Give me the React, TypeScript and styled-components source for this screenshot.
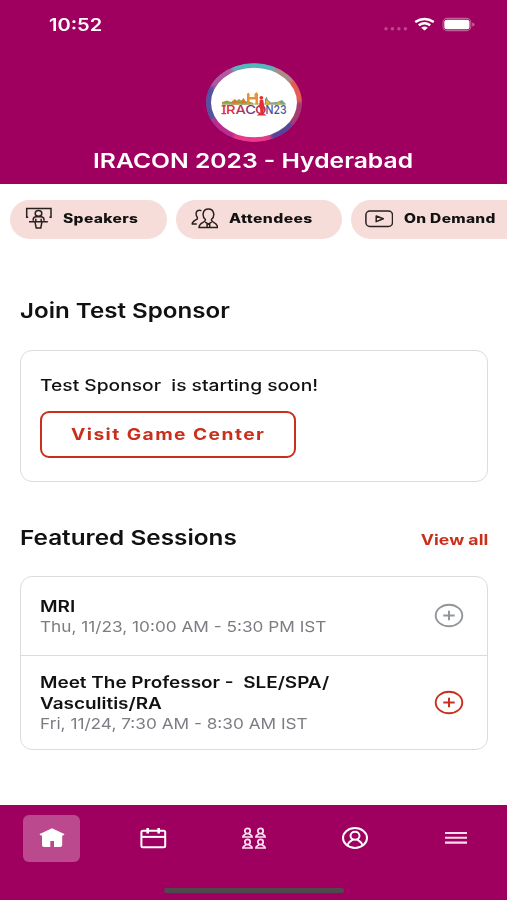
import React from "react";
import styled, { createGlobalStyle } from "styled-components";

const brand = "#9f005f";
const red = "#c9301c";
const line = "#dcdcdc";

const GlobalStyle = createGlobalStyle`
  * { box-sizing: border-box; }
  body { margin: 0; background: #fff; font-family: Inter, "Liberation Sans", sans-serif; }
  svg { display: block; flex: none; }
`;

const Screen = styled.div`
  width: 507px;
  height: 900px;
  overflow: hidden;
  display: flex;
  flex-direction: column;
  background: #fff;
`;

/* Wide-set text: the glyphs are extended horizontally from the chosen edge. */
const Wide = styled.span<{
  $size: number;
  $weight?: number;
  $x: number;
  $lh: number;
  $color?: string;
  $spacing?: number;
  $origin?: string;
}>`
  display: block;
  width: max-content;
  white-space: pre;
  font-size: ${(p) => p.$size}px;
  font-weight: ${(p) => p.$weight ?? 500};
  line-height: ${(p) => p.$lh}px;
  color: ${(p) => p.$color ?? "#111"};
  letter-spacing: ${(p) => p.$spacing ?? 0}px;
  transform: scaleX(${(p) => p.$x});
  transform-origin: ${(p) => p.$origin ?? "left"} center;
`;

const Header = styled.header`
  height: 184px;
  flex: none;
  background: ${brand};
  display: flex;
  flex-direction: column;
  align-items: center;
`;

const StatusBar = styled.div`
  width: 100%;
  height: 63px;
  padding: 14px 32px 0 49px;
  display: flex;
  justify-content: space-between;
  align-items: flex-start;
`;

const Title = styled.div`
  margin: 5px 0 0;
`;

const Chips = styled.nav`
  display: flex;
  gap: 9px;
  padding: 16px 0 0 10px;
  height: 55px;
  flex: none;
  overflow: hidden;
`;

const Chip = styled.div<{ $width: number }>`
  width: ${(p) => p.$width}px;
  height: 38.5px;
  flex: none;
  border-radius: 20px;
  background: #f6ddd9;
  display: flex;
  align-items: center;
  gap: 11px;
  padding: 0 0 0 14px;
`;

const Main = styled.main`
  flex: 1;
  padding: 57px 19px 0 20px;
`;

const SectionHead = styled.div`
  display: flex;
  justify-content: space-between;
  align-items: flex-start;
  height: 30px;
`;

const LinkSlot = styled.div`
  padding-top: 2px;
`;

const Card = styled.section`
  border: 1.5px solid ${line};
  border-radius: 12px;
`;

const SponsorCard = styled(Card)`
  height: 132px;
  margin: 24px 0 40px;
  padding: 22px 19px 0;
`;

const SessionsCard = styled(Card)`
  height: 174px;
  margin-top: 24px;
`;

const OutlineButton = styled.button`
  width: 256px;
  height: 47px;
  margin-top: 14px;
  padding: 0 0 1px 29px;
  display: flex;
  align-items: center;
  font-family: inherit;
  background: #fff;
  border: 2px solid ${red};
  border-radius: 9px;
`;

const Session = styled.div<{ $height: number }>`
  height: ${(p) => p.$height}px;
  padding: 1px 23px 0 19px;
  display: flex;
  align-items: center;
  justify-content: space-between;
  & + & { border-top: 1px solid ${line}; }
`;

const Footer = styled.footer`
  height: 95px;
  flex: none;
  background: ${brand};
  display: flex;
  flex-direction: column;
  align-items: center;
  justify-content: space-between;
  padding: 10px 0 7.5px;
`;

const Tabs = styled.div`
  width: 100%;
  display: flex;
  justify-content: space-between;
  padding: 0 23px;
`;

const Tab = styled.div<{ $active?: boolean }>`
  width: 57px;
  height: 47px;
  padding-bottom: 1px;
  border-radius: 6px;
  display: flex;
  align-items: center;
  justify-content: center;
  background: ${(p) => (p.$active ? "#ba4a8d" : "transparent")};
`;

const HomeIndicator = styled.div`
  width: 180px;
  height: 5px;
  border-radius: 3px;
  background: #51484e;
`;

const StatusIcons = () => (
  <svg width="93" height="22" viewBox="0 0 93 22">
    <g fill="#b94b8a">
      <circle cx="4" cy="14.8" r="1.7" />
      <circle cx="10.4" cy="14.8" r="1.7" />
      <circle cx="16.9" cy="14.8" r="1.7" />
      <circle cx="23.4" cy="14.8" r="1.7" />
    </g>
    <g fill="none" stroke="#fff" strokeWidth="2.5">
      <path d="M33.2 8Q42.5 1.8 51.8 8" />
      <path d="M36.8 11.3Q42.5 7.1 48.2 11.3" />
    </g>
    <path d="M39.2 13.8Q42.5 11.3 45.8 13.8L42.5 16.6Z" fill="#fff" />
    <rect x="61" y="4.4" width="27.8" height="12.2" rx="4" fill="none" stroke="#c16096" strokeWidth="1.1" />
    <rect x="62.3" y="5.7" width="25.2" height="9.6" rx="2.5" fill="#fff" />
    <path d="M90.2 8.5Q92.6 9 92.6 10.5Q92.6 12 90.2 12.5Z" fill="#c16096" />
  </svg>
);

const Logo = () => (
  <svg width="98" height="80" viewBox="0 0 98 80">
    <defs>
      <filter id="soft" x="-10%" y="-10%" width="120%" height="120%">
        <feGaussianBlur stdDeviation="1.6" />
      </filter>
      <clipPath id="oval"><ellipse cx="49" cy="39.5" rx="47.8" ry="39.3" /></clipPath>
    </defs>
    <g clipPath="url(#oval)">
      <rect width="98" height="80" fill="#b04c92" />
      <g fill="none" strokeWidth="10" filter="url(#soft)">
        <path d="M27 5Q48 -3 70 5" stroke="#51b9bd" />
        <path d="M70 5Q80 9 87 18" stroke="#a98e87" />
        <path d="M87 18Q94 27 95 39" stroke="#e45b50" />
        <path d="M95 39Q95 51 87 61" stroke="#a63b70" />
        <path d="M87 61Q79 71 66 76" stroke="#52459a" />
        <path d="M66 76Q48 82 28 75" stroke="#ee3889" />
        <path d="M28 75Q14 69 7 57" stroke="#b92c90" />
        <path d="M7 57Q-2 40 7 23" stroke="#5152a1" />
        <path d="M7 23Q14 11 27 5" stroke="#ad5aa0" />
      </g>
    </g>
    <ellipse cx="49" cy="39.5" rx="43" ry="34.8" fill="#fff" />
    <g>
      <path d="M17 41.5V39L22 37.5L26 39H30L34 36L38 39L43 38L48 40V41.5Z" fill="#93a347" />
      <path d="M26 41.5V39L30 36L34 40V41.5ZM36 41.5V38L38.5 35L41 39V41.5Z" fill="#d47832" />
      <path d="M42 41.5V31L43.3 29.5L44.6 31V34H49.5V31L51.5 29L53 31V41.5H50.5V36.5H44.6V41.5Z" fill="#e79331" />
      <path d="M60 41.5V36L61.5 33.5L63 37L66 39.5L72 39L77 37L80 40V41.5Z" fill="#7ba08d" />
      <path d="M61 41.5V37L64 39V41.5M71 41.5L74 38.5L76 41.5Z" fill="#efb038" />
      <path d="M17 41H81" stroke="#a7aa70" strokeWidth="1.1" />
    </g>
    <g fontFamily="Inter" fontSize="12.3" fontWeight="500">
      <text x="17" y="51.2" textLength="34" lengthAdjust="spacingAndGlyphs">
        <tspan fill="#e12f34">I</tspan><tspan fill="#dc3039">R</tspan><tspan fill="#b7315b">A</tspan><tspan fill="#7d377d">C</tspan>
      </text>
      <text x="50" y="51.2" textLength="11.5" lengthAdjust="spacingAndGlyphs" fill="#a9355e">O</text>
      <text x="60.5" y="51.2" textLength="21" lengthAdjust="spacingAndGlyphs">
        <tspan fill="#4d4a93">N</tspan><tspan fill="#3d559e">23</tspan>
      </text>
    </g>
    <path d="M16.5 42.8H21M16.5 50.7H21" stroke="#e12f34" strokeWidth="1.2" />
    <circle cx="56.3" cy="34.8" r="1.9" fill="#e52e31" />
    <path d="M54.8 37H58.2L59.2 43L58.4 50L61.5 52.4H51.5L55.4 50L55 45L53.5 44L54.3 42Z" fill="#e52e31" />
  </svg>
);

const SpeakerIcon = () => (
  <svg width="28" height="24" viewBox="0 0 28 24" fill="none" stroke="#29201f" strokeWidth="1.5">
    <path d="M4.2 10.2H2.7V1.6H27V10.2H25.4" />
    <ellipse cx="14.5" cy="6.4" rx="3.3" ry="2.9" />
    <path d="M9.2 13.7V12.5Q9.2 9.7 12.2 9.7H16.8Q20 9.7 20 12.5V13.7M5 14.7H23.8M11.8 14.7V11.7M17.2 14.7V11.7M10.9 14.7L12.2 21H16.8L18 14.7" />
  </svg>
);

const AttendeesIcon = () => (
  <svg width="28" height="24" viewBox="0 0 28 24" fill="none" stroke="#29201f" strokeWidth="1.5" strokeLinejoin="round">
    <path d="M11.5 3.6C8 2.3 5.5 4.3 6.2 7.9C6.6 9.7 7.8 10.3 7.4 11.7C7 13 2.4 13.4 2.2 17H6.8" />
    <path d="M18.4 1.9C11.7 1.9 12.2 10.3 15.4 12.5C16 16.2 9.4 14.5 9 20.6H27.6C27.2 14.5 20.8 16.2 21.4 12.5C24.6 10.3 25.2 1.9 18.4 1.9Z" />
    <path d="M15.2 15.1L18.4 17.2L21.6 15.1M17.1 20.2V17.2H19.7V20.2" />
  </svg>
);

const VideoIcon = () => (
  <svg width="28" height="24" viewBox="0 0 28 24" fill="none" stroke="#29201f" strokeWidth="1.5" strokeLinejoin="round">
    <rect x="0.9" y="4" width="26.6" height="15.4" rx="4" />
    <path d="M11.2 9L18.3 11.8L11.2 14.6Z" />
  </svg>
);

const PlusIcon = ({ color }: { color: string }) => (
  <svg width="30" height="27" viewBox="0 0 30 27" fill="none" stroke={color}>
    <ellipse cx="15" cy="12.5" rx="13.3" ry="10.8" strokeWidth="1.9" />
    <path d="M9.3 12.5H20.7M15 7.7V17.3" strokeWidth="2" />
  </svg>
);

const HomeIcon = () => (
  <svg width="26" height="20" viewBox="0 0 26 20" fill="#fff">
    <path d="M13 .2L25.2 6Q26 7.6 23.2 7.4V17Q23.2 19 21 19H15V13H11.3V19H5Q3 19 3 17V7.4Q0 7.6 .8 6Z" />
  </svg>
);

const CalendarIcon = () => (
  <svg width="28" height="24" viewBox="0 0 28 24" fill="none" stroke="#fff" strokeWidth="2">
    <rect x="2.4" y="4.8" width="23.8" height="16.4" rx="1.5" />
    <path d="M2.4 10.9H26.2" />
    <path d="M8.7 2V7.4M19.7 2V7.4" strokeWidth="2.6" />
  </svg>
);

const Person = ({ x, y }: { x: number; y: number }) => (
  <g transform={`translate(${x} ${y})`}>
    <ellipse cx="5.5" cy="3" rx="2.7" ry="2.6" />
    <path d="M4 5.3C4 7.2 .9 6.4 .9 9H10.1C10.1 6.4 7 7.2 7 5.3" />
  </g>
);

const PeopleIcon = () => (
  <svg width="26" height="23" viewBox="0 0 26 23" fill="none" stroke="#fbe4f1" strokeWidth="1.7">
    <Person x={1} y={1} />
    <Person x={14} y={1} />
    <Person x={1} y={12} />
    <Person x={14} y={12} />
  </svg>
);

const ProfileIcon = () => (
  <svg width="28" height="24" viewBox="0 0 28 24" fill="none" stroke="#fff" strokeWidth="2">
    <ellipse cx="14" cy="12" rx="12" ry="9.9" />
    <ellipse cx="14" cy="9.8" rx="4.5" ry="4" />
    <path d="M6.4 19.3C7 15.5 10.5 15.4 11.6 13.4M21.6 19.3C21 15.5 17.5 15.4 16.4 13.4" />
  </svg>
);

const MenuIcon = () => (
  <svg width="22" height="14" viewBox="0 0 22 14" stroke="#fbdcec" strokeWidth="2.1">
    <path d="M0 2H22M0 6.8H22M0 11.6H22" />
  </svg>
);

export default function App() {
  return (
    <Screen>
      <GlobalStyle />
      <Header>
        <StatusBar>
          <Wide $size={17} $weight={600} $x={1.18} $lh={22} $color="#fff">10:52</Wide>
          <StatusIcons />
        </StatusBar>
        <Logo />
        <Title>
          <Wide $size={20.5} $weight={600} $x={1.203} $lh={26} $color="#fff" $origin="center">IRACON 2023 - Hyderabad</Wide>
        </Title>
      </Header>
      <Chips>
        <Chip $width={157}>
          <SpeakerIcon />
          <Wide $size={12.6} $weight={850} $x={1.24} $lh={20} $spacing={0.25}>Speakers</Wide>
        </Chip>
        <Chip $width={165.5}>
          <AttendeesIcon />
          <Wide $size={12.6} $weight={850} $x={1.25} $lh={20} $spacing={0.3}>Attendees</Wide>
        </Chip>
        <Chip $width={180}>
          <VideoIcon />
          <Wide $size={12.6} $weight={850} $x={1.23} $lh={20} $spacing={0.25}>On Demand</Wide>
        </Chip>
      </Chips>
      <Main>
        <SectionHead>
          <Wide $size={20.5} $weight={600} $x={1.177} $lh={30}>Join Test Sponsor</Wide>
        </SectionHead>
        <SponsorCard>
          <Wide $size={16} $weight={500} $x={1.2} $lh={24}>{"Test Sponsor  is starting soon!"}</Wide>
          <OutlineButton>
            <Wide $size={16} $weight={700} $x={1.2} $lh={22} $color={red} $spacing={1.2}>Visit Game Center</Wide>
          </OutlineButton>
        </SponsorCard>
        <SectionHead>
          <Wide $size={20.5} $weight={600} $x={1.187} $lh={31}>Featured Sessions</Wide>
          <LinkSlot>
            <Wide $size={14.5} $weight={700} $x={1.22} $lh={31} $color={red} $origin="right">View all</Wide>
          </LinkSlot>
        </SectionHead>
        <SessionsCard>
          <Session $height={78}>
            <div>
              <Wide $size={16} $weight={600} $x={1.19} $lh={21}>MRI</Wide>
              <Wide $size={15} $weight={400} $x={1.148} $lh={20} $color="#7b7d83">Thu, 11/23, 10:00 AM - 5:30 PM IST</Wide>
            </div>
            <PlusIcon color="#92959a" />
          </Session>
          <Session $height={94}>
            <div>
              <Wide $size={16} $weight={600} $x={1.183} $lh={21}>{"Meet The Professor -  SLE/SPA/\nVasculitis/RA"}</Wide>
              <Wide $size={15} $weight={400} $x={1.148} $lh={20} $color="#7b7d83">Fri, 11/24, 7:30 AM - 8:30 AM IST</Wide>
            </div>
            <PlusIcon color={red} />
          </Session>
        </SessionsCard>
      </Main>
      <Footer>
        <Tabs>
          <Tab $active><HomeIcon /></Tab>
          <Tab><CalendarIcon /></Tab>
          <Tab><PeopleIcon /></Tab>
          <Tab><ProfileIcon /></Tab>
          <Tab><MenuIcon /></Tab>
        </Tabs>
        <HomeIndicator />
      </Footer>
    </Screen>
  );
}
